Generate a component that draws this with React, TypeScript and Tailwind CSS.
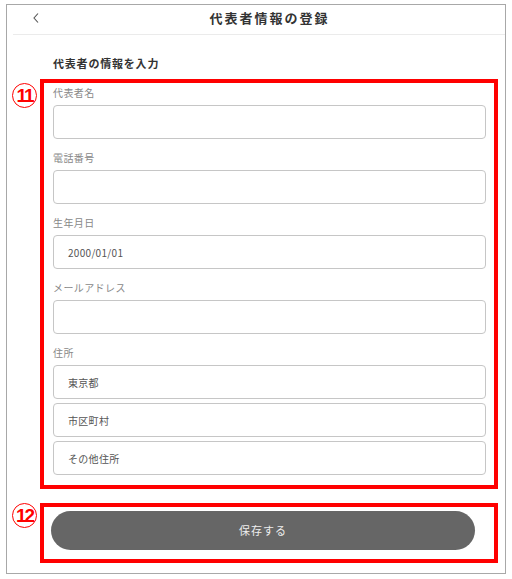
const font = { fontFamily: '"Noto Sans CJK JP", "Noto Sans", sans-serif' };

const fields = [
  { label: '代表者名', value: '' },
  { label: '電話番号', value: '' },
  { label: '生年月日', value: '2000/01/01' },
  { label: 'メールアドレス', value: '' },
];

const address = ['東京都', '市区町村', 'その他住所'];

function Marker({ n, className }: { n: string; className: string }) {
  return (
    <div
      className={`absolute flex h-[25px] w-[25px] items-center justify-center rounded-full border border-[#ff0000] bg-white ${className}`}
    >
      <span
        className="text-[19px] font-bold leading-none tracking-[-2px] text-[#ff0000]"
        style={{ fontFamily: '"Liberation Sans", sans-serif' }}
      >
        {n}
      </span>
    </div>
  );
}

function Box({ value }: { value: string }) {
  return (
    <div className="flex h-[34px] items-center rounded-[4px] border border-[#c6c6c6] bg-white pl-[14px] text-[10px] tracking-[0.3px] text-[#555]">
      {value}
    </div>
  );
}

export default function App() {
  return (
    <div className="h-[579px] w-[512px] bg-white pl-[6px] pt-[4px]" style={font}>
      <div className="flex h-[570px] w-[500px] flex-col border border-[#a8a8a8] bg-white">
        {/* header */}
        <div className="ml-[6px] flex h-[30px] items-center border-b border-[#ebebeb] pl-[19px]">
          <svg width="10" height="12" viewBox="0 0 10 12" className="mb-[4px]">
            <polyline points="6,1.5 2,6 6,10.5" fill="none" stroke="#555" strokeWidth="1.1" />
          </svg>
          <div className="flex-1 pb-[4px] pr-[8px] text-center text-[13px] font-bold tracking-[2px] text-[#333]">
            代表者情報の登録
          </div>
        </div>

        <div className="ml-[33px] mt-[21px] w-[458px]">
          <div className="pl-[13px] text-[11px] font-bold leading-[14px] tracking-[0.8px] text-[#333]">
            代表者の情報を入力
          </div>

          {/* annotation 11 */}
          <div className="relative mt-[9px] border-[4px] border-[#ff0000] pb-[10px] pl-[9px] pr-[8px] pt-[3px]">
            <Marker n="11" className="left-[-32px] top-[0px]" />
            <div className="flex flex-col gap-[12px]">
              {fields.map((f) => (
                <div key={f.label}>
                  <div className="mb-[5px] text-[10px] leading-[14px] tracking-[0.4px] text-[#888]">{f.label}</div>
                  <Box value={f.value} />
                </div>
              ))}
              <div>
                <div className="mb-[5px] text-[10px] leading-[14px] tracking-[0.4px] text-[#888]">住所</div>
                <div className="flex flex-col gap-[4px]">
                  {address.map((a) => (
                    <Box key={a} value={a} />
                  ))}
                </div>
              </div>
            </div>
          </div>

          {/* annotation 12 */}
          <div className="relative mt-[14px] border-[4px] border-[#ff0000] pb-[9px] pl-[7px] pr-[19px] pt-[4px]">
            <Marker n="12" className="left-[-32px] top-[-4px]" />
            <button className="flex h-[39px] w-full items-center justify-center rounded-full bg-[#666] text-[11px] tracking-[1px] text-[#eee]">
              保存する
            </button>
          </div>
        </div>
      </div>
    </div>
  );
}
